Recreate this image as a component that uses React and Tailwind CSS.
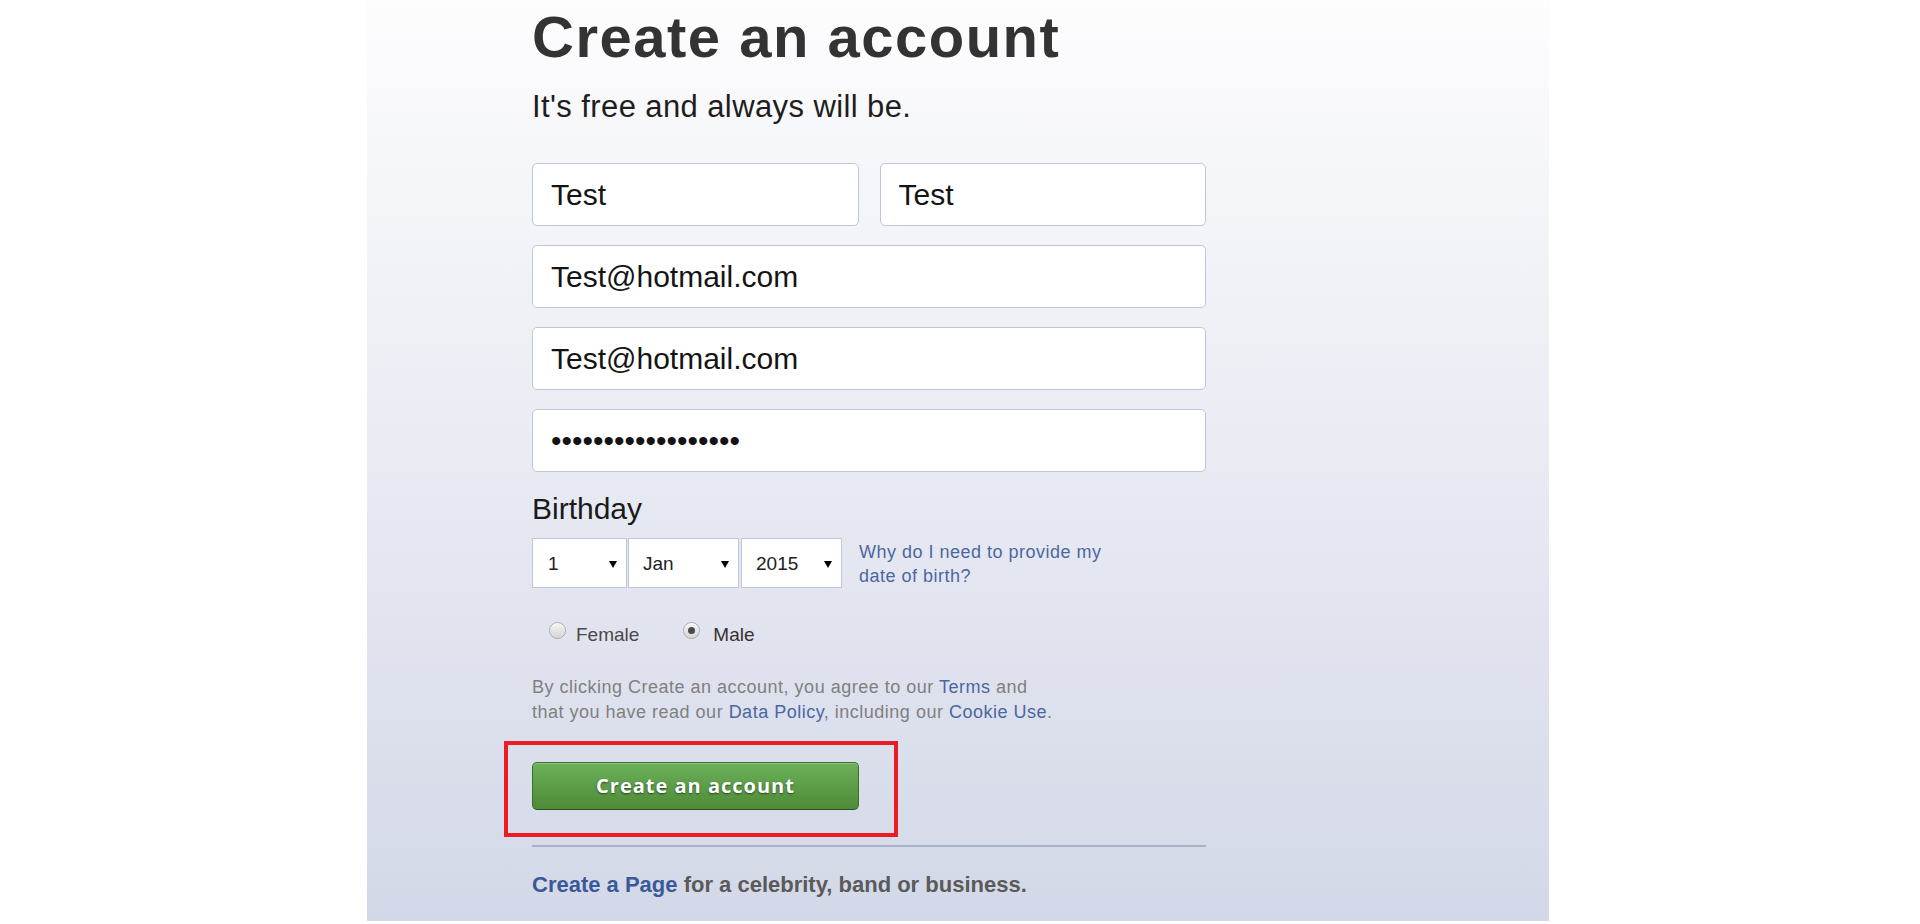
import React from 'react';

const SelectBox = ({ value, width, extra = '' }) => (
  <div
    className={`flex items-center justify-between h-[50px] bg-white border border-[#bdc7d8] pl-[14px] pr-[9px] pt-[2px] text-[19px] text-[#222] ${width} ${extra}`}
  >
    <span>{value}</span>
    <span className="w-0 h-0 border-x-[4px] border-x-transparent border-t-[7px] border-t-black"></span>
  </div>
);

const Radio = ({ checked }) => (
  <div className="w-[17px] h-[17px] rounded-full border border-[#a9abb0] bg-gradient-to-b from-[#f4f4f4] to-[#d6d6d6] flex items-center justify-center shadow-[inset_0_1px_1px_rgba(255,255,255,0.9)]">
    {checked && <div className="w-[7px] h-[7px] rounded-full bg-[#4a4a4a]"></div>}
  </div>
);

const Field = ({ value, type = 'text' }) => (
  <input
    type={type}
    readOnly
    value={value}
    className="w-full h-[63px] bg-white border border-[#bdc7d8] rounded-[5px] px-[18px] text-[30px] text-[#141414] outline-none"
  />
);

const App = () => {
  return (
    <div className="min-h-screen bg-white font-['Liberation_Sans',Arial,sans-serif]">
      <div className="ml-[367px] w-[1182px] h-[921px] bg-gradient-to-b from-[#fdfdfe] via-[#e9ebf3] to-[#d3d8e8] pl-[165px] pt-[8px]">
        <div className="w-[674px]">
          {/* Heading */}
          <h1 className="text-[58px] leading-[58px] font-bold tracking-[1.5px] text-[#333]">Create an account</h1>
          <p className="mt-[25px] text-[31px] leading-[31px] tracking-[0.4px] text-[#1e1e1e]">
            It's free and always will be.
          </p>

          {/* Inputs */}
          <div className="mt-[41px] flex flex-col gap-[19px]">
            <div className="grid grid-cols-2 gap-[21px]">
              <Field value="Test" />
              <Field value="Test" />
            </div>
            <Field value="Test@hotmail.com" />
            <Field value="Test@hotmail.com" />
            <Field type="password" value="passwordpassword12" />
          </div>

          {/* Birthday */}
          <div className="mt-[22px] text-[30px] leading-[30px] text-[#1a1a1a]">Birthday</div>
          <div className="mt-[14px] flex items-start">
            <SelectBox value="1" width="w-[95px]" extra="pl-[15px]" />
            <SelectBox value="Jan" width="w-[111px]" extra="ml-[1px]" />
            <SelectBox value="2015" width="w-[101px]" extra="ml-[2px]" />
            <a className="ml-[17px] mt-[2px] text-[18px] leading-[24px] tracking-[0.5px] text-[#4b67a1]">
              Why do I need to provide my
              <br />
              date of birth?
            </a>
          </div>

          {/* Gender */}
          <div className="mt-[34px] pl-[17px] flex items-start">
            <Radio />
            <span className="ml-[10px] mt-[1px] text-[19px] leading-[24px] text-[#4a4a4a]">Female</span>
            <div className="ml-[44px]">
              <Radio checked />
            </div>
            <span className="ml-[13px] mt-[1px] text-[19px] leading-[24px] text-[#3a3030]">Male</span>
          </div>

          {/* Terms */}
          <p className="mt-[28px] text-[18px] leading-[25px] tracking-[0.5px] text-[#808080]">
            By clicking Create an account, you agree to our <a className="text-[#4b67a1]">Terms</a> and
            <br />
            that you have read our <a className="text-[#4b67a1]">Data Policy</a>, including our{' '}
            <a className="text-[#4b67a1]">Cookie Use</a>.
          </p>

          {/* Submit */}
          <div className="relative mt-[37px] w-[327px] h-[48px]">
            <button className="w-full h-full rounded-[5px] border border-[#3d6d27] border-b-[#2d5219] bg-gradient-to-b from-[#6bb15a] to-[#4f8a37] shadow-[inset_0_1px_0_rgba(255,255,255,0.25)] text-white font-['Open_Sans',sans-serif] font-bold text-[20px] tracking-[1px] [text-shadow:0_1px_2px_rgba(0,0,0,0.55)]">
              Create an account
            </button>
            <div className="absolute -left-[28px] -top-[21px] w-[394px] h-[96px] border-4 border-[#ed1c24]"></div>
          </div>

          <div className="mt-[35px] h-[2px] w-[674px] bg-[#a9b1c7]"></div>

          <p className="mt-[25px] text-[22px] leading-[26px] font-bold text-[#5a5a5a]">
            <a className="text-[#3b5998]">Create a Page</a> for a celebrity, band or business.
          </p>
        </div>
      </div>
    </div>
  );
};

export default App;
